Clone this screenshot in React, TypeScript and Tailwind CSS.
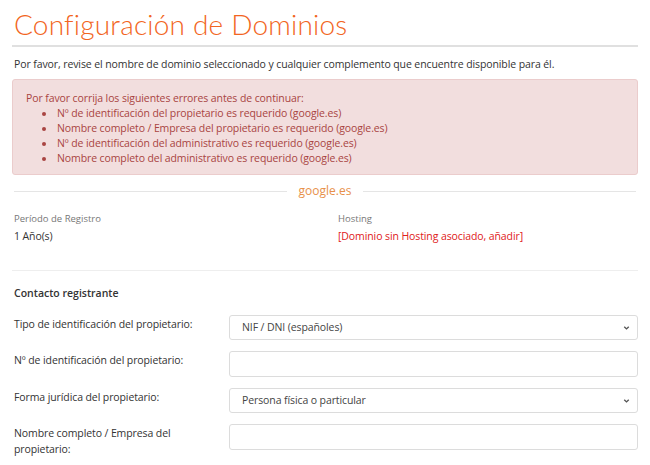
import React from "react";

const Chevron = () => (
  <svg width="9" height="9" viewBox="0 0 10 10" className="absolute right-[6px] top-1/2 -translate-y-1/2">
    <path d="M2.5 3.5 L5 6 L7.5 3.5" fill="none" stroke="#555" strokeWidth="1.5" />
  </svg>
);

const Select = ({ value }: { value: string }) => (
  <div className="relative h-[25px] w-[409px] rounded-[3px] border border-[#dcdcdc] bg-white pl-[12px] flex items-center text-[10.5px] tracking-[-0.1px] text-[#444]">
    {value}
    <Chevron />
  </div>
);

const Input = () => (
  <div className="h-[26px] w-[409px] rounded-[3px] border border-[#dcdcdc] bg-white" />
);

export default function App() {
  const errors = [
    "Nº de identificación del propietario es requerido (google.es)",
    "Nombre completo / Empresa del propietario es requerido (google.es)",
    "Nº de identificación del administrativo es requerido (google.es)",
    "Nombre completo del administrativo es requerido (google.es)",
  ];
  return (
    <div className="w-[650px] h-[465px] overflow-hidden bg-white px-[12px] text-[#333]" style={{ fontFamily: '"Open Sans", sans-serif' }}>
      <div className="pt-[6px] pl-[2px] pb-[3px] border-b-2 border-[#e0e0e0]">
        <h1 className="text-[28px] leading-[36px] font-light text-[#f26522] tracking-[0.2px]" style={{ fontFamily: 'Lato, sans-serif' }}>
          Configuración de Dominios
        </h1>
      </div>
      <p className="mt-[9px] pl-[2px] text-[10.5px] tracking-[-0.1px] leading-[16px] text-[#333]">
        Por favor, revise el nombre de dominio seleccionado y cualquier complemento que encuentre disponible para él.
      </p>
      <div className="mt-[7px] rounded-[3px] border border-[#ebcccc] bg-[#f2dede] pl-[13px] pt-[11px] pb-[8px] text-[10.5px] tracking-[-0.1px] leading-[15px] text-[#a94442]">
        <div>Por favor corrija los siguientes errores antes de continuar:</div>
        <ul className="pl-[30px] list-disc marker:text-[#a94442]">
          {errors.map((e) => (
            <li key={e} className="pl-[1px]">{e}</li>
          ))}
        </ul>
      </div>
      <div className="mt-[7px] flex items-center gap-[12px] px-[2px]">
        <div className="flex-1 h-px bg-[#e5e5e5]" />
        <div className="text-[12px] leading-[18px] text-[#e8914a]">google.es</div>
        <div className="flex-1 h-px bg-[#e5e5e5]" />
      </div>
      <div className="mt-[12px] grid grid-cols-2 pl-[2px] pb-[26px] border-b border-[#eeeeee]">
        <div>
          <div className="text-[9.5px] leading-[14px] text-[#777]">Período de Registro</div>
          <div className="mt-[2px] text-[10.5px] tracking-[-0.1px] leading-[16px] text-[#333]">1 Año(s)</div>
        </div>
        <div className="pl-[12px]">
          <div className="text-[9.5px] leading-[14px] text-[#777]">Hosting</div>
          <div className="mt-[2px] text-[10.5px] tracking-[-0.1px] leading-[16px] text-[#e02020]">[Dominio sin Hosting asociado, añadir]</div>
        </div>
      </div>
      <div className="mt-[14px] pl-[2px] text-[10.5px] leading-[16px] font-semibold text-[#333]">Contacto registrante</div>
      <div className="mt-[14px] flex flex-col gap-[11px] pl-[2px]">
        <div className="flex items-start justify-between">
          <div className="text-[10.5px] tracking-[-0.1px] leading-[16px] pt-[1px] text-[#333]">Tipo de identificación del propietario:</div>
          <Select value="NIF / DNI (españoles)" />
        </div>
        <div className="flex items-start justify-between">
          <div className="text-[10.5px] tracking-[-0.1px] leading-[16px] pt-[1px] text-[#333]">Nº de identificación del propietario:</div>
          <Input />
        </div>
        <div className="flex items-start justify-between">
          <div className="text-[10.5px] tracking-[-0.1px] leading-[16px] pt-[1px] text-[#333]">Forma jurídica del propietario:</div>
          <Select value="Persona física o particular" />
        </div>
        <div className="flex items-start justify-between">
          <div className="text-[10.5px] tracking-[-0.1px] leading-[16px] pt-[1px] text-[#333]">Nombre completo / Empresa del<br />propietario:</div>
          <Input />
        </div>
      </div>
    </div>
  );
}
